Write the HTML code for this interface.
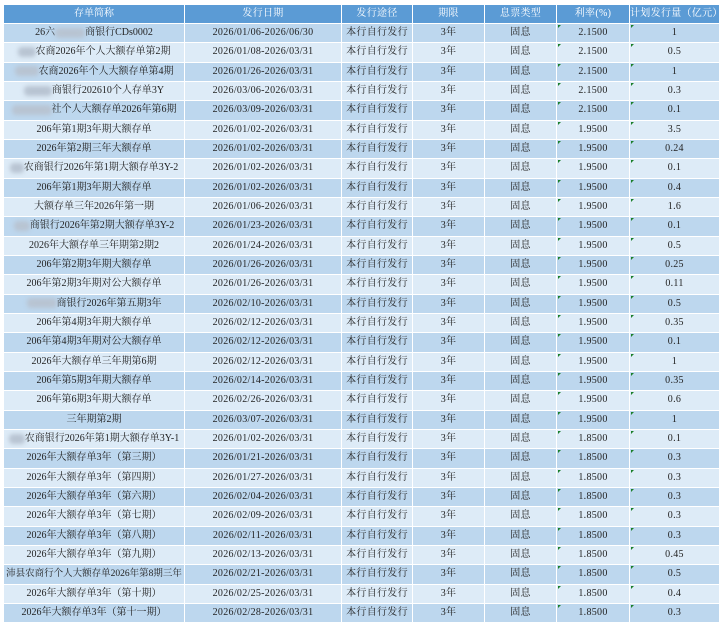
<!DOCTYPE html>
<html><head><meta charset="utf-8"><style>
body{margin:0;width:720px;height:628px;background:#fff;overflow:hidden;font-family:"Liberation Serif","Noto Serif CJK SC",serif;}
#t{position:absolute;left:4px;top:5px;width:715px;}
.r{display:flex;height:19.33px;box-sizing:border-box;border-bottom:1px solid #fff;}
.r>div{box-sizing:border-box;border-right:1px solid #fff;text-align:center;font-size:10px;letter-spacing:0.3px;line-height:18px;color:#222;white-space:nowrap;overflow:hidden;position:relative;}
.r>div:last-child{border-right:none}
.h{height:19px;background:#5b9bd5}
.h>div{color:#fff !important;}
.r:nth-child(even){background:#bdd7ee}
.r:nth-child(odd):not(.h){background:#ddebf7}
.c1{width:181px;letter-spacing:0 !important}.c2{width:157px}.c3{width:71px}.c4{width:72px}.c5{width:72px}.c6{width:73px}.c7{width:89px}
.c6::before,.c7::before{content:"";position:absolute;left:1px;top:1px;width:0;height:0;border-top:3px solid #1a7f2a;border-right:3px solid transparent}
.h .c6::before,.h .c7::before{display:none}
.b{display:inline-block;height:10px;background:#b8c4d2;filter:blur(2px);vertical-align:middle;border-radius:4px}
</style></head><body><div id="t">
<div class="r h"><div class="c1">存单简称</div><div class="c2">发行日期</div><div class="c3">发行途径</div><div class="c4">期限</div><div class="c5">息票类型</div><div class="c6">利率(%)</div><div class="c7">计划发行量（亿元）</div></div>
<div class="r"><div class="c1">26六<span class="b" style="width:30px"></span>商银行CDs0002</div><div class="c2">2026/01/06-2026/06/30</div><div class="c3">本行自行发行</div><div class="c4">3年</div><div class="c5">固息</div><div class="c6">2.1500</div><div class="c7">1</div></div>
<div class="r"><div class="c1"><span class="b" style="width:18px"></span>农商2026年个人大额存单第2期</div><div class="c2">2026/01/08-2026/03/31</div><div class="c3">本行自行发行</div><div class="c4">3年</div><div class="c5">固息</div><div class="c6">2.1500</div><div class="c7">0.5</div></div>
<div class="r"><div class="c1"><span class="b" style="width:24px"></span>农商2026年个人大额存单第4期</div><div class="c2">2026/01/26-2026/03/31</div><div class="c3">本行自行发行</div><div class="c4">3年</div><div class="c5">固息</div><div class="c6">2.1500</div><div class="c7">1</div></div>
<div class="r"><div class="c1"><span class="b" style="width:28px"></span>商银行202610个人存单3Y</div><div class="c2">2026/03/06-2026/03/31</div><div class="c3">本行自行发行</div><div class="c4">3年</div><div class="c5">固息</div><div class="c6">2.1500</div><div class="c7">0.3</div></div>
<div class="r"><div class="c1"><span class="b" style="width:40px"></span>社个人大额存单2026年第6期</div><div class="c2">2026/03/09-2026/03/31</div><div class="c3">本行自行发行</div><div class="c4">3年</div><div class="c5">固息</div><div class="c6">2.1500</div><div class="c7">0.1</div></div>
<div class="r"><div class="c1">206年第1期3年期大额存单</div><div class="c2">2026/01/02-2026/03/31</div><div class="c3">本行自行发行</div><div class="c4">3年</div><div class="c5">固息</div><div class="c6">1.9500</div><div class="c7">3.5</div></div>
<div class="r"><div class="c1">2026年第2期三年大额存单</div><div class="c2">2026/01/02-2026/03/31</div><div class="c3">本行自行发行</div><div class="c4">3年</div><div class="c5">固息</div><div class="c6">1.9500</div><div class="c7">0.24</div></div>
<div class="r"><div class="c1"><span class="b" style="width:14px"></span>农商银行2026年第1期大额存单3Y-2</div><div class="c2">2026/01/02-2026/03/31</div><div class="c3">本行自行发行</div><div class="c4">3年</div><div class="c5">固息</div><div class="c6">1.9500</div><div class="c7">0.1</div></div>
<div class="r"><div class="c1">206年第1期3年期大额存单</div><div class="c2">2026/01/02-2026/03/31</div><div class="c3">本行自行发行</div><div class="c4">3年</div><div class="c5">固息</div><div class="c6">1.9500</div><div class="c7">0.4</div></div>
<div class="r"><div class="c1">大额存单三年2026年第一期</div><div class="c2">2026/01/06-2026/03/31</div><div class="c3">本行自行发行</div><div class="c4">3年</div><div class="c5">固息</div><div class="c6">1.9500</div><div class="c7">1.6</div></div>
<div class="r"><div class="c1"><span class="b" style="width:16px"></span>商银行2026年第2期大额存单3Y-2</div><div class="c2">2026/01/23-2026/03/31</div><div class="c3">本行自行发行</div><div class="c4">3年</div><div class="c5">固息</div><div class="c6">1.9500</div><div class="c7">0.1</div></div>
<div class="r"><div class="c1">2026年大额存单三年期第2期2</div><div class="c2">2026/01/24-2026/03/31</div><div class="c3">本行自行发行</div><div class="c4">3年</div><div class="c5">固息</div><div class="c6">1.9500</div><div class="c7">0.5</div></div>
<div class="r"><div class="c1">206年第2期3年期大额存单</div><div class="c2">2026/01/26-2026/03/31</div><div class="c3">本行自行发行</div><div class="c4">3年</div><div class="c5">固息</div><div class="c6">1.9500</div><div class="c7">0.25</div></div>
<div class="r"><div class="c1">206年第2期3年期对公大额存单</div><div class="c2">2026/01/26-2026/03/31</div><div class="c3">本行自行发行</div><div class="c4">3年</div><div class="c5">固息</div><div class="c6">1.9500</div><div class="c7">0.11</div></div>
<div class="r"><div class="c1"><span class="b" style="width:30px"></span>商银行2026年第五期3年</div><div class="c2">2026/02/10-2026/03/31</div><div class="c3">本行自行发行</div><div class="c4">3年</div><div class="c5">固息</div><div class="c6">1.9500</div><div class="c7">0.5</div></div>
<div class="r"><div class="c1">206年第4期3年期大额存单</div><div class="c2">2026/02/12-2026/03/31</div><div class="c3">本行自行发行</div><div class="c4">3年</div><div class="c5">固息</div><div class="c6">1.9500</div><div class="c7">0.35</div></div>
<div class="r"><div class="c1">206年第4期3年期对公大额存单</div><div class="c2">2026/02/12-2026/03/31</div><div class="c3">本行自行发行</div><div class="c4">3年</div><div class="c5">固息</div><div class="c6">1.9500</div><div class="c7">0.1</div></div>
<div class="r"><div class="c1">2026年大额存单三年期第6期</div><div class="c2">2026/02/12-2026/03/31</div><div class="c3">本行自行发行</div><div class="c4">3年</div><div class="c5">固息</div><div class="c6">1.9500</div><div class="c7">1</div></div>
<div class="r"><div class="c1">206年第5期3年期大额存单</div><div class="c2">2026/02/14-2026/03/31</div><div class="c3">本行自行发行</div><div class="c4">3年</div><div class="c5">固息</div><div class="c6">1.9500</div><div class="c7">0.35</div></div>
<div class="r"><div class="c1">206年第6期3年期大额存单</div><div class="c2">2026/02/26-2026/03/31</div><div class="c3">本行自行发行</div><div class="c4">3年</div><div class="c5">固息</div><div class="c6">1.9500</div><div class="c7">0.6</div></div>
<div class="r"><div class="c1">三年期第2期</div><div class="c2">2026/03/07-2026/03/31</div><div class="c3">本行自行发行</div><div class="c4">3年</div><div class="c5">固息</div><div class="c6">1.9500</div><div class="c7">1</div></div>
<div class="r"><div class="c1"><span class="b" style="width:16px"></span>农商银行2026年第1期大额存单3Y-1</div><div class="c2">2026/01/02-2026/03/31</div><div class="c3">本行自行发行</div><div class="c4">3年</div><div class="c5">固息</div><div class="c6">1.8500</div><div class="c7">0.1</div></div>
<div class="r"><div class="c1">2026年大额存单3年（第三期）</div><div class="c2">2026/01/21-2026/03/31</div><div class="c3">本行自行发行</div><div class="c4">3年</div><div class="c5">固息</div><div class="c6">1.8500</div><div class="c7">0.3</div></div>
<div class="r"><div class="c1">2026年大额存单3年（第四期）</div><div class="c2">2026/01/27-2026/03/31</div><div class="c3">本行自行发行</div><div class="c4">3年</div><div class="c5">固息</div><div class="c6">1.8500</div><div class="c7">0.3</div></div>
<div class="r"><div class="c1">2026年大额存单3年（第六期）</div><div class="c2">2026/02/04-2026/03/31</div><div class="c3">本行自行发行</div><div class="c4">3年</div><div class="c5">固息</div><div class="c6">1.8500</div><div class="c7">0.3</div></div>
<div class="r"><div class="c1">2026年大额存单3年（第七期）</div><div class="c2">2026/02/09-2026/03/31</div><div class="c3">本行自行发行</div><div class="c4">3年</div><div class="c5">固息</div><div class="c6">1.8500</div><div class="c7">0.3</div></div>
<div class="r"><div class="c1">2026年大额存单3年（第八期）</div><div class="c2">2026/02/11-2026/03/31</div><div class="c3">本行自行发行</div><div class="c4">3年</div><div class="c5">固息</div><div class="c6">1.8500</div><div class="c7">0.3</div></div>
<div class="r"><div class="c1">2026年大额存单3年（第九期）</div><div class="c2">2026/02/13-2026/03/31</div><div class="c3">本行自行发行</div><div class="c4">3年</div><div class="c5">固息</div><div class="c6">1.8500</div><div class="c7">0.45</div></div>
<div class="r"><div class="c1" style="font-size:9.5px">沛县农商行个人大额存单2026年第8期三年</div><div class="c2">2026/02/21-2026/03/31</div><div class="c3">本行自行发行</div><div class="c4">3年</div><div class="c5">固息</div><div class="c6">1.8500</div><div class="c7">0.5</div></div>
<div class="r"><div class="c1">2026年大额存单3年（第十期）</div><div class="c2">2026/02/25-2026/03/31</div><div class="c3">本行自行发行</div><div class="c4">3年</div><div class="c5">固息</div><div class="c6">1.8500</div><div class="c7">0.4</div></div>
<div class="r"><div class="c1">2026年大额存单3年（第十一期）</div><div class="c2">2026/02/28-2026/03/31</div><div class="c3">本行自行发行</div><div class="c4">3年</div><div class="c5">固息</div><div class="c6">1.8500</div><div class="c7">0.3</div></div>
</div></body></html>
